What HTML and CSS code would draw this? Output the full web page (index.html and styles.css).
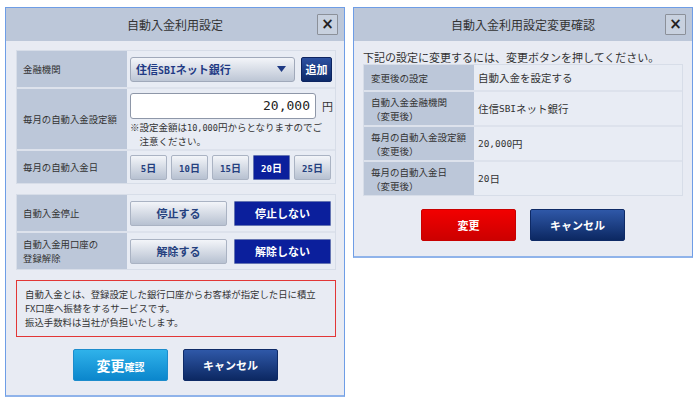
FILE: index.html
```
<!DOCTYPE html>
<html lang="ja">
<head>
<meta charset="utf-8">
<title>自動入金利用設定</title>
<link rel="stylesheet" href="styles.css">
</head>
<body>
<div class="page">
  <section class="dialog dlg-left">
    <header class="dlg-head">
      <span></span>
      <h1 class="dlg-title">自動入金利用設定</h1>
      <button class="close" type="button">×</button>
    </header>
    <div class="dlg-body">
      <div class="tbl">
        <div class="row r-bank">
          <div class="lab">金融機関</div>
          <div class="val">
            <div class="select"><span>住信<span class="num">SBI</span>ネット銀行</span><svg class="caret" width="9" height="6" viewBox="0 0 9 6"><polygon points="0,0 9,0 4.5,6" fill="#1f3a84"/></svg></div>
            <button class="btn-add" type="button">追加</button>
          </div>
        </div>
        <div class="row r-amount">
          <div class="lab">毎月の自動入金設定額</div>
          <div class="val val-col">
            <div class="amount"><div class="input num">20,000</div><span class="yen">円</span></div>
            <p class="note">※設定金額は<span class="num">10,000</span>円からとなりますのでご<br>注意ください。</p>
          </div>
        </div>
        <div class="row r-day">
          <div class="lab">毎月の自動入金日</div>
          <div class="val days">
            <button class="btn-light day" type="button"><span class="num">5</span>日</button>
            <button class="btn-light day" type="button"><span class="num">10</span>日</button>
            <button class="btn-light day" type="button"><span class="num">15</span>日</button>
            <button class="btn-sel day" type="button"><span class="num">20</span>日</button>
            <button class="btn-light day" type="button"><span class="num">25</span>日</button>
          </div>
        </div>
      </div>

      <div class="tbl tbl2">
        <div class="row r-opt">
          <div class="lab">自動入金停止</div>
          <div class="val opts">
            <button class="btn-light opt" type="button">停止する</button>
            <button class="btn-sel opt" type="button">停止しない</button>
          </div>
        </div>
        <div class="row r-opt">
          <div class="lab lab-2">自動入金用口座の<br>登録解除</div>
          <div class="val opts">
            <button class="btn-light opt" type="button">解除する</button>
            <button class="btn-sel opt" type="button">解除しない</button>
          </div>
        </div>
      </div>

      <div class="notice">自動入金とは、登録設定した銀行口座からお客様が指定した日に積立<br>FX口座へ振替をするサービスです。<br>振込手数料は当社が負担いたします。</div>

      <div class="actions">
        <button class="btn-big btn-blue" type="button"><span class="big">変更</span><span class="small">確認</span></button>
        <button class="btn-big btn-navy" type="button">キャンセル</button>
      </div>
    </div>
  </section>

  <section class="dialog dlg-right">
    <header class="dlg-head">
      <span></span>
      <h1 class="dlg-title">自動入金利用設定変更確認</h1>
      <button class="close" type="button">×</button>
    </header>
    <div class="dlg-body body-right">
      <p class="intro">下記の設定に変更するには、変更ボタンを押してください。</p>
      <div class="tbl tbl-confirm">
        <div class="crow c-first">
          <div class="lab clab">変更後の設定</div>
          <div class="cval">自動入金を設定する</div>
        </div>
        <div class="crow">
          <div class="lab clab">自動入金金融機関<br>（変更後）</div>
          <div class="cval">住信<span class="num">SBI</span>ネット銀行</div>
        </div>
        <div class="crow">
          <div class="lab clab">毎月の自動入金設定額<br>（変更後）</div>
          <div class="cval"><span class="num">20,000</span>円</div>
        </div>
        <div class="crow">
          <div class="lab clab">毎月の自動入金日<br>（変更後）</div>
          <div class="cval"><span class="num">20</span>日</div>
        </div>
      </div>
      <div class="actions actions-right">
        <button class="btn-big btn-red" type="button">変更</button>
        <button class="btn-big btn-navy" type="button">キャンセル</button>
      </div>
    </div>
  </section>
</div>
</body>
</html>
```

FILE: styles.css
```
* { box-sizing: border-box; }

body {
  margin: 0;
  background: #ffffff;
  font-family: "Noto Sans CJK JP", sans-serif;
  color: #333333;
}

.num {
  font-family: "DejaVu Sans Mono", "Noto Sans CJK JP", monospace;
  font-size: 0.9em;
}

button {
  font-family: inherit;
  margin: 0;
  padding: 0;
  cursor: pointer;
}

.page {
  display: flex;
  align-items: flex-start;
  gap: 8px;
  padding: 7px 0 0 5px;
}

.dialog {
  width: 340px;
  border: 1px solid #6e9de6;
  border-bottom: 2px solid #8fb3ea;
  background: #e8ebf3;
}

.dlg-left { height: 390px; }
.dlg-right { height: 251px; }

.dlg-head {
  height: 33px;
  background: #bcc7d9;
  display: grid;
  grid-template-columns: 1fr auto 1fr;
  align-items: center;
}

.dlg-title {
  margin: 0;
  font-size: 12px;
  font-weight: normal;
  color: #333333;
  line-height: 14px;
}

.close {
  justify-self: end;
  margin-right: 6px;
  width: 21px;
  height: 21px;
  border: 1px solid #8b9099;
  border-radius: 1px;
  background: #c8d1df;
  color: #222222;
  font-size: 15px;
  line-height: 17px;
  font-weight: bold;
  font-family: "DejaVu Sans", sans-serif;
}

.dlg-body {
  padding: 9px 8px 0 10px;
}

.tbl {
  border: 1px solid #d7dde8;
  background: #e8ecf4;
}

.tbl2 { margin-top: 10px; }

.row {
  display: grid;
  grid-template-columns: 110px 1fr;
}
.row + .row { border-top: 2px solid #dde2ec; }

.r-bank { height: 36px; }
.r-amount { height: 62px; }
.r-day { height: 34px; }
.r-opt { height: 36px; }
.r-opt + .r-opt { height: 38px; }

.lab {
  background: #bcc7d9;
  padding-left: 6px;
  display: flex;
  align-items: center;
  font-size: 9.4px;
  line-height: 14px;
  color: #333333;
}

.val {
  display: flex;
  align-items: center;
  padding: 0 3px;
}

.select {
  width: 165px;
  height: 25px;
  border: 1px solid #a0a9ba;
  border-radius: 3px;
  background: linear-gradient(#f3f5f9, #bdc6d5);
  display: flex;
  align-items: center;
  justify-content: space-between;
  padding: 0 8px 0 5px;
  font-size: 11px;
  font-weight: bold;
  color: #1f3a84;
}

.caret { display: block; }

.btn-add {
  margin-left: 6px;
  width: 31px;
  height: 25px;
  border: 1px solid #0d2460;
  border-radius: 2px;
  background: linear-gradient(#2c50a0, #0d2a6a);
  color: #ffffff;
  font-size: 11px;
  font-weight: bold;
}

.val-col {
  flex-direction: column;
  align-items: flex-start;
  justify-content: flex-start;
  padding-top: 4px;
}

.amount {
  display: flex;
  align-items: center;
}

.input {
  width: 186px;
  height: 26px;
  background: #ffffff;
  border: 1px solid #8e97a8;
  border-radius: 3px;
  text-align: right;
  padding-right: 5px;
  font-size: 13px;
  line-height: 24px;
  color: #222222;
}

.yen {
  margin-left: 6px;
  font-size: 11px;
  color: #333333;
}

.note {
  margin: 2px 0 0;
  font-size: 9.5px;
  line-height: 13px;
  padding-left: 1em;
  text-indent: -1em;
  white-space: nowrap;
  color: #333333;
}

.days { gap: 4px; }
.opts { gap: 7px; }

.btn-light {
  border: 1px solid #aab3c3;
  border-radius: 2px;
  background: linear-gradient(#f3f5f9, #b7c1d1);
  color: #24407e;
  font-weight: bold;
  font-size: 10px;
}

.btn-sel {
  border: 1px solid #6474b2;
  border-radius: 1px;
  background: #0b1f9c;
  color: #ffffff;
  font-weight: bold;
  font-size: 10px;
}

.day { width: 37px; height: 25px; }
.opt { width: 97px; height: 25px; font-size: 11px; }

.notice {
  margin-top: 10px;
  height: 57px;
  border: 1px solid #e23636;
  padding: 6px 8px;
  font-size: 9.4px;
  line-height: 14px;
  color: #333333;
  white-space: nowrap;
}

.actions {
  margin-top: 12px;
  display: flex;
  justify-content: center;
  gap: 15px;
  padding-right: 1px;
}

.btn-big {
  width: 95px;
  height: 32px;
  border-radius: 2px;
  color: #ffffff;
  font-weight: bold;
  font-size: 11px;
}

.btn-blue {
  border: 1px solid #1c8ccc;
  background: linear-gradient(#2fb2ea, #0b86cc);
}
.btn-blue .big { font-size: 14px; }
.btn-blue .small { font-size: 10px; }

.btn-navy {
  border: 1px solid #0e2a66;
  background: linear-gradient(#2f58a8, #0c2862);
}

.btn-red {
  border: 1px solid #c80000;
  background: linear-gradient(#f20000, #cc0000);
}

.body-right {
  padding: 9px 9px 0 9px;
}

.intro {
  margin: 0;
  font-size: 11px;
  line-height: 14px;
  color: #333333;
  white-space: nowrap;
}

.crow {
  display: grid;
  grid-template-columns: 110px 1fr;
  height: 35px;
}
.crow + .crow { border-top: 2px solid #dde2ec; }
.crow.c-first { height: 25px; }

.clab {
  padding-left: 7px;
  font-size: 9.5px;
  line-height: 14px;
}

.cval {
  display: flex;
  align-items: center;
  padding-left: 4px;
  font-size: 10.5px;
  color: #333333;
}

.actions-right {
  margin-top: 13px;
  gap: 14px;
  padding-right: 0;
}
```
